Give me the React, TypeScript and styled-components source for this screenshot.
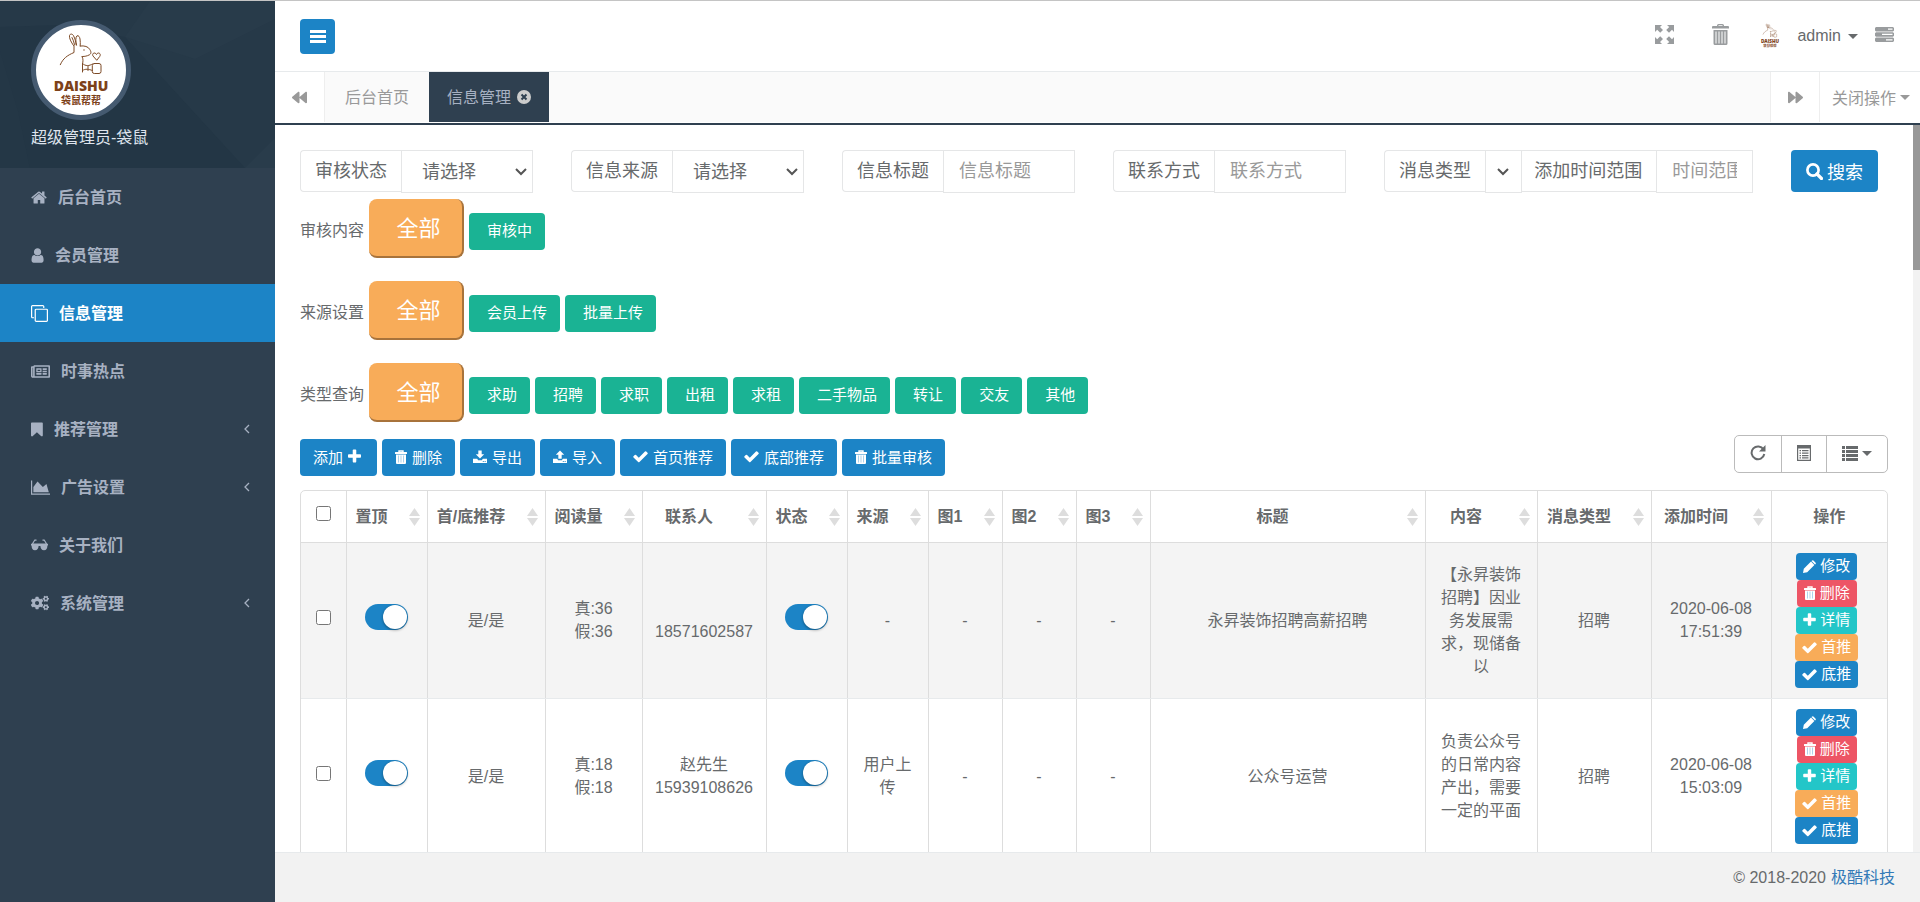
import React from "react";
import styled, { createGlobalStyle, css } from "styled-components";
import { FaBackward, FaCogs, FaForward, FaRegNewspaper } from "react-icons/fa";

const color = {
  primary: "#1c84c6",
  success: "#1ab394",
  info: "#23c6c8",
  warning: "#f8ac59",
  danger: "#ed5565",
  navy: "#2f4050",
  text: "#676a6c",
  muted: "#999c9e",
  line: "#e7eaec",
  input: "#e5e6e7",
  table: "#dddddd",
};

const GlobalStyle = createGlobalStyle`
  *, *::before, *::after { box-sizing: border-box; }
  body {
    margin: 0;
    color: ${color.text};
    background: #ffffff;
    font: 16px/23px "Liberation Sans", "Noto Sans CJK SC", sans-serif;
  }
  button, input, select { font-family: inherit; color: inherit; }
  button { cursor: pointer; }
  a { text-decoration: none; }
  svg { flex: none; display: block; }
`;

/* ---------- icons ---------- */

type IconProps = { size?: number };

const fa = (d: string, x: number, width: number) =>
  function FaGlyph({ size = 16 }: IconProps) {
    return (
      <svg viewBox={`${x} 0 ${width} 1792`} width={Math.round((size * width) / 1792)} height={size} fill="currentColor" aria-hidden>
        <path d={d} />
      </svg>
    );
  };

const HomeIcon = fa(
  "M1472 992v480q0 26-19 45t-45 19h-384v-384h-256v384h-384q-26 0-45-19t-19-45v-480q0-1 .5-3t.5-3l575-474 575 474q1 2 1 6zm223-69l-62 74q-8 9-21 11h-3q-13 0-21-7l-692-577-692 577q-12 8-24 7-13-2-21-11l-62-74q-8-10-7-23.5t11-21.5l719-599q32-26 76-26t76 26l244 204v-195q0-14 9-23t23-9h192q14 0 23 9t9 23v408l219 182q10 8 11 21.5t-7 23.5z",
  64, 1664
);
const UserIcon = fa(
  "M1536 1399q0 109-62.500 187t-150.500 78h-854q-88 0-150.500-78t-62.500-187q0-85 8.500-160.500t31.500-152 58.500-131 94-89 134.500-34.500q131 128 313 128t313-128q76 0 134.500 34.500t94 89 58.500 131 31.500 152 8.500 160.500zm-256-887q0 159-112.500 271.500t-271.500 112.500-271.500-112.500-112.500-271.500 112.500-271.500 271.500-112.500 271.500 112.500 112.500 271.500z",
  200, 1380
);
const CloneIcon = fa(
  "M1664 1632v-1088q0-13-9.500-22.500t-22.500-9.500h-1088q-13 0-22.500 9.500t-9.500 22.500v1088q0 13 9.500 22.500t22.500 9.500h1088q13 0 22.500-9.500t9.500-22.500zm128-1088v1088q0 66-47 113t-113 47h-1088q-66 0-113-47t-47-113v-1088q0-66 47-113t113-47h1088q66 0 113 47t47 113zm-384-384v160h-128v-160q0-13-9.500-22.500t-22.500-9.500h-1088q-13 0-22.500 9.500t-9.500 22.500v1088q0 13 9.500 22.500t22.500 9.500h160v128h-160q-66 0-113-47t-47-113v-1088q0-66 47-113t113-47h1088q66 0 113 47t47 113z",
  0, 1792
);
const BookmarkIcon = fa(
  "M1420 128q23 0 44 9 33 13 52.500 41t19.500 62v1289q0 34-19.500 62t-52.500 41q-19 8-44 8-48 0-83-32l-441-424-441 424q-36 33-83 33-23 0-44-9-33-13-52.500-41t-19.500-62v-1289q0-34 19.500-62t52.500-41q21-9 44-9h1048z",
  256, 1300
);
const AreaIcon = fa(
  "M2048 1536v128h-2048v-1536h128v1408h1920zm-384-1024l256 896h-1664v-576l448-576 576 576z",
  0, 2048
);
const PlusIcon = fa(
  "M1600 736v192q0 40-28 68t-68 28h-416v416q0 40-28 68t-68 28h-192q-40 0-68-28t-28-68v-416h-416q-40 0-68-28t-28-68v-192q0-40 28-68t68-28h416v-416q0-40 28-68t68-28h192q40 0 68 28t28 68v416h416q40 0 68 28t28 68z",
  192, 1408
);
const CheckIcon = fa(
  "M1671 566q0 40-28 68l-724 724-136 136q-28 28-68 28t-68-28l-136-136-362-362q-28-28-28-68t28-68l136-136q28-28 68-28t68 28l294 295 656-657q28-28 68-28t68 28l136 136q28 28 28 68z",
  96, 1600
);

const TrashIcon = () => (
  <svg width="12" height="14" viewBox="0 0 12 14" aria-hidden>
    <path d="M4 2V1h4v1" fill="none" stroke="currentColor" strokeWidth="1.400" />
    <path d="M.5 2h11q.5 0 .5.5V4H0V2.500Q0 2 .5 2zM1 4.500h10V13q0 1-1 1H2q-1 0-1-1z" fill="currentColor" />
    <path d="M3.500 5.500v7M6 5.500v7M8.500 5.500v7" stroke={color.primary} strokeOpacity=".45" strokeWidth=".8" />
  </svg>
);
const GlassesIcon = () => (
  <svg width="17" height="12" viewBox="0 0 17 12" fill="currentColor" aria-hidden>
    <path d="M3.500 0.500h2v1.300H4L2.300 4.500h12.400L13 1.800h-1.500V.5h2l2.500 4 1 .5v1.500h-.6c0 3-1 4.700-3.400 4.700S9.600 9.500 9.400 7H7.600c-.2 2.500-1.200 4.200-3.600 4.200S.6 9.500.6 6.500H0V5l1-.5z" />
  </svg>
);
const AngleLeft = () => (
  <svg width="6" height="10" viewBox="0 0 6 10" fill="none" stroke="currentColor" strokeWidth="1.3" aria-hidden>
    <path d="M5 1L1 5l4 4" />
  </svg>
);
const BarsIcon = () => (
  <svg width="16" height="14" viewBox="0 0 16 14" fill="currentColor" aria-hidden>
    <path d="M0 0h16v3H0zM0 5h16v3H0zM0 10h16v3H0z" />
  </svg>
);
const FullscreenIcon = () => (
  <svg width="19" height="19" viewBox="0 0 19 19" fill="currentColor" aria-hidden>
    <path d="M0 0h7L5 2l3 3-2.800 2.800-3-3L0 7zM19 0v7l-2-2.200-3 3L11.200 5l3-3L12 0zM0 19v-7l2.200 2.200 3-3L8 14l-3 3 2 2zM19 19h-7l2.200-2-3-3 2.800-2.800 3 3L19 12z" />
  </svg>
);
const BinIcon = () => (
  <svg width="17" height="21" viewBox="0 0 17 21" fill="currentColor" aria-hidden>
    <path fillRule="evenodd" d="M5 2V1.500Q5 0 6.500 0h4Q12 0 12 1.500V2h4q1 0 1 1v1.500H0V3q0-1 1-1zm1.500 0h4v-.7h-4zM1.500 6h14v13.500q0 1.500-1.500 1.500H3q-1.500 0-1.500-1.500zM3.500 7.500v12h1v-12zM6.500 7.500v12h1v-12zM9.500 7.500v12h1v-12zM12.500 7.500v12h1v-12z" />
  </svg>
);
const TasksIcon = () => (
  <svg width="19" height="15" viewBox="0 0 19 15" aria-hidden>
    <path fill="currentColor" d="M1 0h17l1 1v2.500l-1 1H1l-1-1V1zM1 5.200h17l1 1v2.500l-1 1H1l-1-1V6.200zM1 10.500h17l1 1V14l-1 1H1l-1-1v-2.500z" />
    <path fill="#ffffff" d="M13 1.500h4.500v1.200H13zM7 6.800h10.500V8H7zM11 12.200h6.500v1.200H11z" />
  </svg>
);
const CloseCircle = () => (
  <svg width="14" height="14" viewBox="0 0 14 14" aria-hidden>
    <circle cx="7" cy="7" r="7" fill="#cccccc" />
    <path d="M4.500 4.500l5 5M9.500 4.500l-5 5" stroke={color.navy} strokeWidth="2" />
  </svg>
);
const SearchIcon = () => (
  <svg width="17" height="17" viewBox="0 0 17 17" fill="none" stroke="currentColor" aria-hidden>
    <circle cx="7" cy="7" r="5.600" strokeWidth="2.700" />
    <path d="M11 11l4.500 4.500" strokeWidth="3.200" strokeLinecap="round" />
  </svg>
);
const Tray = ({ up }: { up?: boolean }) => (
  <svg width="14" height="14" viewBox="0 0 15 14" fill="currentColor" aria-hidden>
    <path d={up ? "M7.500 0l4.500 4.500H9.300V9H5.700V4.500H3z" : "M5.700 0h3.600v4H12L7.500 8.500 3 4h2.700z"} />
    <path d="M0 9h4.500l1 1.500h4l1-1.500H15v4.500H0zM10.500 11.300v1h1v-1zM12.500 11.300v1h1v-1z" fillRule="evenodd" />
  </svg>
);
const PencilIcon = () => (
  <svg width="13" height="13" viewBox="0 0 13 13" fill="currentColor" aria-hidden>
    <path d="M0 13l.8-4.200L8 1.600 11.400 5 4.200 12.200zM8.800.8Q9.600 0 10.400.6l2 2q.9.900 0 1.700l-.4.300L8.500 1.100z" />
  </svg>
);
const RefreshIcon = () => (
  <svg width="16" height="16" viewBox="0 0 16 16" aria-hidden>
    <path d="M13.500 4.500A6.400 6.400 0 1 0 14.300 9" fill="none" stroke="currentColor" strokeWidth="2" />
    <path d="M15.500 0v6.500H9z" fill="currentColor" />
  </svg>
);
const CardViewIcon = () => (
  <svg width="14" height="16" viewBox="0 0 14 16" fill="currentColor" aria-hidden>
    <path fillRule="evenodd" d="M0 0h14v16H0zM1.200 3.500v11.300h11.600V3.500z" />
    <path d="M2.500 5H4v1.300H2.500zM5 5h6.500v1.300H5zM2.500 7.500H4v1.300H2.500zM5 7.500h6.500v1.300H5zM2.500 10H4v1.300H2.500zM5 10h6.500v1.300H5zM2.500 12.300H4v1.300H2.500zM5 12.300h6.500v1.300H5z" />
  </svg>
);
const ListIcon = () => (
  <svg width="16" height="15" viewBox="0 0 16 15" fill="currentColor" aria-hidden>
    <path d="M0 0h3v3H0zM4 0h12v3H4zM0 4h3v3H0zM4 4h12v3H4zM0 8h3v3H0zM4 8h12v3H4zM0 12h3v3H0zM4 12h12v3H4z" />
  </svg>
);
const SortIcon = () => (
  <svg width="11" height="18" viewBox="0 0 11 18" fill="#dddddd" aria-hidden>
    <path d="M5.500 0L11 8H0zM0 10h11l-5.500 8z" />
  </svg>
);
const ChevronDown = () => (
  <svg width="12" height="8" viewBox="0 0 12 8" fill="none" stroke="#555555" strokeWidth="2" aria-hidden>
    <path d="M1 1l5 5 5-5" />
  </svg>
);

const Logo = ({ size }: { size: number }) => (
  <svg width={size} height={size} viewBox="0 0 90 90" role="img" aria-label="DAISHU">
    <g fill="none" stroke="#7d4a26" strokeWidth="1" strokeLinecap="round" strokeLinejoin="round">
      <path d="M37.500 20.500C35 17 33 13 33.500 10.500c.6-2 3-1.800 4 .2 1.600 3 2.300 6 2.700 9.300M36 12.500c1 2 2 4.500 2.500 7M40.500 20c-1-3.500-1-8 .5-9.200 1.600-.6 2.700 1.200 3 3.200.4 2.500.4 4.500.2 7" />
      <path d="M44.300 21c4-.5 8 .5 9.500 3.500 1.700 2.500 1.500 4.500-.8 5.500-2 1-4 1.500-6.500 1.500M38 20.500v7c-7 3-11 6-13.700 12.200M46 31.500c1.500 2.500 1 5 .5 7.500v8M46.500 38.500c3 3 7 2.500 9.800.5M46.500 45.500c3-2 6-1.500 9.800 0M52 41v4.500" />
      <rect x="56.300" y="38.500" width="8.700" height="10" rx="2" />
      <path d="M60.500 35l-3.500-4c-1.500-2.500 2-4.500 3.500-1.500 1.500-3 5-1 3.500 1.500z" />
    </g>
    <circle cx="48" cy="25" r=".7" fill="#7d4a26" />
    <g fill="#7d4119" textAnchor="middle">
      <text x="45" y="66" fontFamily="'Open Sans', sans-serif" fontWeight="800" fontSize="14">DAISHU</text>
      <text x="45" y="79" fontFamily="'Noto Sans CJK SC', sans-serif" fontWeight="700" fontSize="10">袋鼠帮帮</text>
    </g>
  </svg>
);

const Caret = styled.span`
  border: 5px solid transparent;
  border-top-color: currentColor;
  border-bottom: 0;
`;

/* ---------- shell ---------- */

const Shell = styled.div`
  display: flex;
  height: 100vh;
  border-top: 1px solid #c4c4c4;
`;
const Sidebar = styled.aside`
  flex: 0 0 275px;
  background: ${color.navy};
`;
const Profile = styled.header`
  position: relative;
  height: 167px;
  padding: 19px 31px 0;
  background: #233645;
  color: #dfe4ed;
`;
const Facets = styled.svg`
  position: absolute;
  inset: 0;
  width: 100%;
  height: 100%;
`;
const Avatar = styled.div`
  position: relative;
  width: 100px;
  height: 100px;
  border: 5px solid #455a70;
  border-radius: 50%;
  background: #ffffff;
`;
const ProfileName = styled.div`
  position: relative;
  margin-top: 6px;
`;
const Menu = styled.nav`
  display: flex;
  flex-direction: column;
`;
const MenuLink = styled.a<{ $active?: boolean }>`
  display: flex;
  align-items: center;
  gap: 11px;
  height: 58px;
  padding: 0 25px 0 31px;
  font-weight: 600;
  color: ${(p) => (p.$active ? "#ffffff" : "#a7b1c2")};
  background: ${(p) => (p.$active ? color.primary : "transparent")};
`;
const MenuLabel = styled.span`
  flex: 1;
`;

const Workspace = styled.div`
  flex: 1;
  min-width: 0;
  display: flex;
  flex-direction: column;
`;
const TopBar = styled.header`
  display: flex;
  align-items: flex-start;
  justify-content: space-between;
  height: 71px;
  padding: 18px 25px 0;
  border-bottom: 1px solid ${color.line};
`;
const MenuToggle = styled.button`
  display: flex;
  align-items: center;
  justify-content: center;
  width: 35px;
  height: 35px;
  padding: 0;
  border: 0;
  border-radius: 4px;
  background: ${color.primary};
  color: #ffffff;
`;
const TopActions = styled.div`
  display: flex;
  align-items: center;
  height: 34px;
  color: ${color.muted};
`;
const PlainButton = styled.button<{ $gap: number }>`
  display: flex;
  align-items: center;
  padding: 0 0 4px;
  margin-right: ${(p) => p.$gap}px;
  border: 0;
  background: none;
`;
const UserButton = styled(PlainButton)`
  gap: 7px;
  padding: 0;
  font-size: 16px;
  color: ${color.text};
`;
const UserLogo = styled.span`
  margin-right: 12px;
`;

const TabBar = styled.div`
  display: flex;
  height: 53px;
  border-bottom: 2px solid ${color.navy};
  padding-bottom: 1px;
  color: #999999;
`;
const TabArrow = styled.button<{ $side: "left" | "right" }>`
  display: flex;
  align-items: center;
  justify-content: center;
  width: 50px;
  border: 0 solid #eeeeee;
  border-width: ${(p) => (p.$side === "left" ? "0 1px 0 0" : "0 1px")};
  background: #ffffff;
`;
const Tabs = styled.nav`
  flex: 1;
  display: flex;
  background: #fafafa;
`;
const Tab = styled.a<{ $active?: boolean }>`
  display: flex;
  align-items: center;
  gap: 6px;
  padding: 0 ${(p) => (p.$active ? 18 : 20)}px;
  color: ${(p) => (p.$active ? "#a7b1c2" : "#999999")};
  background: ${(p) => (p.$active ? color.navy : "transparent")};
`;
const TabMenu = styled.button`
  display: flex;
  align-items: center;
  justify-content: flex-end;
  gap: 4px;
  width: 100px;
  padding: 0 10px 0 0;
  border: 0;
  background: #ffffff;
  font-size: 16px;
`;

const Body = styled.div`
  flex: 1;
  min-height: 0;
  display: flex;
`;
const Content = styled.main`
  flex: 1;
  min-width: 0;
  overflow-y: auto;
  scrollbar-width: none;
  padding: 25px 25px 0;
`;
const ScrollTrack = styled.div`
  flex: 0 0 7px;
  background: #f2f2f2;
`;
const ScrollThumb = styled.div`
  height: 20%;
  background: #989898;
`;
const Footer = styled.footer`
  flex: 0 0 50px;
  display: flex;
  align-items: center;
  justify-content: flex-end;
  gap: 5px;
  padding: 0 25px;
  border-top: 1px solid ${color.line};
  background: #f2f2f2;
`;
const FooterLink = styled.a`
  color: #337ab7;
`;

/* ---------- search form ---------- */

const SearchForm = styled.form`
  display: flex;
  gap: 38px;
  padding-right: 10px;
`;
const FieldPair = styled.div`
  flex: 369 1 0;
  display: flex;
  gap: 4px;
`;
const Field = styled.div<{ $grow: number }>`
  flex: ${(p) => p.$grow} 1 0;
  min-width: 0;
  display: flex;
`;
const FieldLabel = styled.label`
  flex: none;
  height: 42px;
  padding: 0 14px;
  border: 1px solid ${color.input};
  border-right: 0;
  border-radius: 4px 0 0 4px;
  font-size: 18px;
  line-height: 40px;
`;
const control = css`
  width: 100%;
  height: 43px;
  padding: 0 15px;
  border: 1px solid ${color.input};
  border-radius: 0;
  background: #ffffff;
  font-size: 18px;
`;
const FieldInput = styled.input`
  ${control}
  min-width: 0;
  &::placeholder { color: #999999; opacity: 1; }
`;
const SelectBox = styled.div`
  position: relative;
  flex: 1;
  min-width: 0;
  display: flex;
  > svg {
    position: absolute;
    right: 6px;
    top: 18px;
    pointer-events: none;
  }
`;
const FieldSelect = styled.select`
  ${control}
  appearance: none;
  padding: 0 15px 0 20px;
`;
const SearchButton = styled.button`
  display: flex;
  align-items: center;
  gap: 4px;
  height: 42px;
  padding: 0 15px;
  border: 0;
  border-radius: 4px;
  background: ${color.primary};
  color: #ffffff;
  font-size: 18px;
`;

/* ---------- quick filters and tools ---------- */

const QuickRow = styled.div`
  display: flex;
  align-items: baseline;
  gap: 5px;
  height: 82px;
  padding-top: 6px;
`;
const AllButton = styled.button`
  width: 95px;
  height: 59px;
  padding: 2px 20px 0 26px;
  border: 0 solid #a8733b;
  border-width: 0 2px 2px 0;
  border-radius: 8px;
  background: ${color.warning};
  color: #ffffff;
  font-size: 22px;
  line-height: 54px;
`;
const QuickButton = styled.button`
  height: 37px;
  padding: 0 13px 4px 18px;
  border: 0;
  border-radius: 4px;
  background: ${color.success};
  color: #ffffff;
  font-size: 15px;
`;
const Tools = styled.div`
  display: flex;
  justify-content: space-between;
  align-items: flex-start;
  height: 55px;
  margin-top: -4px;
`;
const ToolGroup = styled.div`
  display: flex;
  gap: 5px;
  padding-top: 4px;
`;
const ToolButton = styled.button<{ $trailing?: boolean }>`
  display: flex;
  align-items: center;
  gap: 5px;
  height: 37px;
  padding: 0 ${(p) => (p.$trailing ? 16 : 13)}px 2px 13px;
  border: 0;
  border-radius: 4px;
  background: ${color.primary};
  color: #ffffff;
  font-size: 15px;
`;
const ViewGroup = styled.div`
  display: flex;
  border: 1px solid #bbbbbb;
  border-radius: 5px;
`;
const ViewButton = styled.button`
  display: flex;
  align-items: center;
  gap: 4px;
  height: 36px;
  padding: 0 15px 2px;
  border: 0;
  background: none;
  & + & { border-left: 1px solid #bbbbbb; }
`;

/* ---------- table ---------- */

const TableFrame = styled.div`
  border: 1px solid ${color.table};
  border-radius: 5px 5px 0 0;
`;
const Table = styled.table`
  width: 100%;
  table-layout: fixed;
  border-collapse: collapse;
  text-align: center;
`;
const Col = styled.col<{ $width?: number }>`
  width: ${(p) => (p.$width ? `${p.$width}px` : "auto")};
`;
const HeadCell = styled.th<{ $sortable?: boolean }>`
  position: relative;
  height: 51px;
  padding: ${(p) => (p.$sortable ? "0 30px 0 0" : "0")};
  border-bottom: 1px solid ${color.table};
  border-right: 1px solid ${color.table};
  font-weight: 600;
  white-space: nowrap;
  &:last-child { border-right: 0; }
  > svg {
    position: absolute;
    right: 7px;
    top: 17px;
  }
`;
const BodyRow = styled.tr<{ $striped?: boolean }>`
  background: ${(p) => (p.$striped ? "#f4f4f4" : "#ffffff")};
`;
const Cell = styled.td`
  height: 156px;
  padding: 0 10px;
  border-bottom: 1px solid ${color.line};
  border-right: 1px solid ${color.table};
  vertical-align: middle;
  &:last-child { border-right: 0; }
`;
const SummaryCell = styled(Cell)`
  padding: 0 14px;
`;
const Tick = styled.input`
  display: block;
  width: 15px;
  height: 15px;
  margin: 0 auto 6px;
`;
const Switch = styled.input`
  appearance: none;
  display: block;
  width: 43px;
  height: 26px;
  margin: 0 auto 6px;
  border-radius: 13px;
  background: ${color.primary};
  &::before {
    content: "";
    display: block;
    width: 24px;
    height: 24px;
    margin: 1px 1px 1px 18px;
    border-radius: 50%;
    background: #ffffff;
    box-shadow: 0 1px 3px rgba(0, 0, 0, 0.4);
  }
`;
const Actions = styled.div`
  display: flex;
  flex-direction: column;
  align-items: center;
  padding-right: 5px;
`;
const ActionButton = styled.button<{ $bg: string }>`
  display: flex;
  align-items: center;
  gap: 4px;
  height: 27px;
  padding: 0 7px;
  border: 0;
  border-radius: 4px;
  background: ${(p) => p.$bg};
  color: #ffffff;
  font-size: 15px;
  line-height: 22px;
`;

/* ---------- data ---------- */

const menu = [
  { label: "后台首页", icon: <HomeIcon size={17} /> },
  { label: "会员管理", icon: <UserIcon size={17} /> },
  { label: "信息管理", icon: <CloneIcon size={17} />, active: true },
  { label: "时事热点", icon: <FaRegNewspaper size={19} /> },
  { label: "推荐管理", icon: <BookmarkIcon size={17} />, nested: true },
  { label: "广告设置", icon: <AreaIcon size={17} />, nested: true },
  { label: "关于我们", icon: <GlassesIcon /> },
  { label: "系统管理", icon: <FaCogs size={18} />, nested: true },
];

const quickRows = [
  { label: "审核内容", options: ["审核中"] },
  { label: "来源设置", options: ["会员上传", "批量上传"] },
  { label: "类型查询", options: ["求助", "招聘", "求职", "出租", "求租", "二手物品", "转让", "交友", "其他"] },
];

const tools = [
  { label: "删除", icon: <TrashIcon /> },
  { label: "导出", icon: <Tray /> },
  { label: "导入", icon: <Tray up /> },
  { label: "首页推荐", icon: <CheckIcon size={17} /> },
  { label: "底部推荐", icon: <CheckIcon size={17} /> },
  { label: "批量审核", icon: <TrashIcon /> },
];

const columns: { title: string; width?: number }[] = [
  { title: "置顶", width: 81 },
  { title: "首/底推荐", width: 118 },
  { title: "阅读量", width: 97 },
  { title: "联系人", width: 124 },
  { title: "状态", width: 81 },
  { title: "来源", width: 81 },
  { title: "图1", width: 74 },
  { title: "图2", width: 74 },
  { title: "图3", width: 74 },
  { title: "标题" },
  { title: "内容", width: 112 },
  { title: "消息类型", width: 114 },
  { title: "添加时间", width: 120 },
];

const rows = [
  {
    real: 36, fake: 36, contact: "", phone: "18571602587", source: "-",
    title: "永昇装饰招聘高薪招聘", summary: "【永昇装饰招聘】因业务发展需求，现储备以",
    type: "招聘", time: "2020-06-08 17:51:39",
  },
  {
    real: 18, fake: 18, contact: "赵先生", phone: "15939108626", source: "用户上传",
    title: "公众号运营", summary: "负责公众号的日常内容产出，需要一定的平面",
    type: "招聘", time: "2020-06-08 15:03:09",
  },
];

const rowActions = [
  { label: "修改", bg: color.primary, icon: <PencilIcon /> },
  { label: "删除", bg: color.danger, icon: <TrashIcon /> },
  { label: "详情", bg: color.info, icon: <PlusIcon size={16} /> },
  { label: "首推", bg: color.warning, icon: <CheckIcon size={17} /> },
  { label: "底推", bg: color.primary, icon: <CheckIcon size={17} /> },
];

function SelectField({ id, label, option, grow }: { id: string; label: string; option: string; grow: number }) {
  return (
    <Field $grow={grow}>
      <FieldLabel htmlFor={id}>{label}</FieldLabel>
      <SelectBox>
        <FieldSelect id={id}>
          <option>{option}</option>
        </FieldSelect>
        <ChevronDown />
      </SelectBox>
    </Field>
  );
}

function TextField({ id, label, hint, grow }: { id: string; label: string; hint: string; grow: number }) {
  return (
    <Field $grow={grow}>
      <FieldLabel htmlFor={id}>{label}</FieldLabel>
      <FieldInput id={id} placeholder={hint} />
    </Field>
  );
}

export default function App() {
  return (
    <Shell>
      <GlobalStyle />
      <Sidebar>
        <Profile>
          <Facets viewBox="0 0 275 167" preserveAspectRatio="none" aria-hidden>
            <path d="M0 0h275v167h-30L125 36 60 24 0 26z" fill="#263948" />
            <path d="M150 0L125 36l70 22 80-40V0z" fill="#283b4a" />
            <path d="M245 167l30-30v30z" fill="#293c4b" />
            <path d="M0 50l18 60 12 57H0z" fill="#243746" />
          </Facets>
          <Avatar><Logo size={90} /></Avatar>
          <ProfileName>超级管理员-袋鼠</ProfileName>
        </Profile>
        <Menu>
          {menu.map((m) => (
            <MenuLink key={m.label} href="#" $active={m.active}>
              {m.icon}
              <MenuLabel>{m.label}</MenuLabel>
              {m.nested && <AngleLeft />}
            </MenuLink>
          ))}
        </Menu>
      </Sidebar>

      <Workspace>
        <TopBar>
          <MenuToggle aria-label="菜单"><BarsIcon /></MenuToggle>
          <TopActions>
            <PlainButton $gap={38} aria-label="全屏"><FullscreenIcon /></PlainButton>
            <PlainButton $gap={26} aria-label="清除缓存"><BinIcon /></PlainButton>
            <UserLogo><Logo size={30} /></UserLogo>
            <UserButton $gap={17}>admin <Caret /></UserButton>
            <PlainButton $gap={1} aria-label="任务"><TasksIcon /></PlainButton>
          </TopActions>
        </TopBar>

        <TabBar>
          <TabArrow $side="left" aria-label="向左"><FaBackward size={15} /></TabArrow>
          <Tabs>
            <Tab href="#">后台首页</Tab>
            <Tab href="#" $active>信息管理 <CloseCircle /></Tab>
          </Tabs>
          <TabArrow $side="right" aria-label="向右"><FaForward size={15} /></TabArrow>
          <TabMenu>关闭操作<Caret /></TabMenu>
        </TabBar>

        <Body>
          <Content>
            <SearchForm>
              <SelectField id="audit" label="审核状态" option="请选择" grow={233} />
              <SelectField id="source" label="信息来源" option="请选择" grow={233} />
              <TextField id="title" label="信息标题" hint="信息标题" grow={233} />
              <TextField id="contact" label="联系方式" hint="联系方式" grow={233} />
              <FieldPair>
                <SelectField id="type" label="消息类型" option="" grow={132} />
                <TextField id="range" label="添加时间范围" hint="时间范围" grow={235} />
              </FieldPair>
              <SearchButton type="button"><SearchIcon />搜索</SearchButton>
            </SearchForm>

            {quickRows.map((r) => (
              <QuickRow key={r.label}>
                <span>{r.label}</span>
                <AllButton>全部</AllButton>
                {r.options.map((o) => <QuickButton key={o}>{o}</QuickButton>)}
              </QuickRow>
            ))}

            <Tools>
              <ToolGroup>
                <ToolButton $trailing>添加<PlusIcon size={17} /></ToolButton>
                {tools.map((t) => <ToolButton key={t.label}>{t.icon}{t.label}</ToolButton>)}
              </ToolGroup>
              <ViewGroup>
                <ViewButton aria-label="刷新"><RefreshIcon /></ViewButton>
                <ViewButton aria-label="切换视图"><CardViewIcon /></ViewButton>
                <ViewButton aria-label="显示列"><ListIcon /><Caret /></ViewButton>
              </ViewGroup>
            </Tools>

            <TableFrame>
              <Table>
                <colgroup>
                  <Col $width={45} />
                  {columns.map((c) => <Col key={c.title} $width={c.width} />)}
                  <Col $width={116} />
                </colgroup>
                <thead>
                  <tr>
                    <HeadCell><Tick type="checkbox" aria-label="全选" /></HeadCell>
                    {columns.map((c) => (
                      <HeadCell key={c.title} $sortable>{c.title}<SortIcon /></HeadCell>
                    ))}
                    <HeadCell>操作</HeadCell>
                  </tr>
                </thead>
                <tbody>
                  {rows.map((r, i) => (
                    <BodyRow key={r.phone} $striped={i % 2 === 0}>
                      <Cell><Tick type="checkbox" aria-label="选择" /></Cell>
                      <Cell><Switch type="checkbox" defaultChecked aria-label="置顶" /></Cell>
                      <Cell>是/是</Cell>
                      <Cell>真:{r.real}<br />假:{r.fake}</Cell>
                      <Cell>{r.contact}<br />{r.phone}</Cell>
                      <Cell><Switch type="checkbox" defaultChecked aria-label="状态" /></Cell>
                      <Cell>{r.source}</Cell>
                      <Cell>-</Cell>
                      <Cell>-</Cell>
                      <Cell>-</Cell>
                      <Cell>{r.title}</Cell>
                      <SummaryCell>{r.summary}</SummaryCell>
                      <Cell>{r.type}</Cell>
                      <Cell>{r.time}</Cell>
                      <Cell>
                        <Actions>
                          {rowActions.map((a) => (
                            <ActionButton key={a.label} $bg={a.bg}>{a.icon}{a.label}</ActionButton>
                          ))}
                        </Actions>
                      </Cell>
                    </BodyRow>
                  ))}
                </tbody>
              </Table>
            </TableFrame>
          </Content>
          <ScrollTrack><ScrollThumb /></ScrollTrack>
        </Body>

        <Footer>
          <span>© 2018-2020</span>
          <FooterLink href="#">极酷科技</FooterLink>
        </Footer>
      </Workspace>
    </Shell>
  );
}
